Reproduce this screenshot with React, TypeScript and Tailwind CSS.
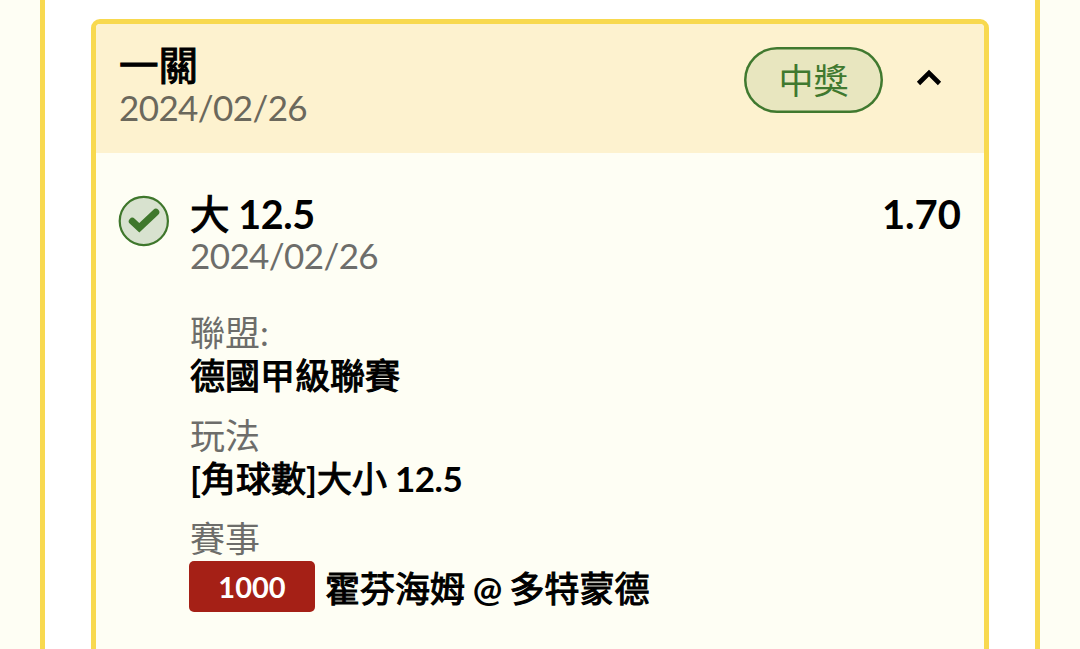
import { ReactNode } from 'react';

interface DetailProps {
  label: string;
  children: ReactNode;
}

// Chinese glyphs sit between regular and bold
function Han({ children }: { children: ReactNode }) {
  return <span className="font-normal [-webkit-text-stroke:1.100px_currentColor]">{children}</span>;
}

function Detail({ label, children }: DetailProps) {
  return (
    <div>
      <dt className="-mt-px mb-px text-[35px] leading-[42px] text-[#6d6d6a]">{label}</dt>
      <dd className="text-[35px] leading-[42px] font-bold text-black">{children}</dd>
    </div>
  );
}

function ChevronUpIcon() {
  return (
    <svg width="26" height="18" viewBox="0 0 26 18" fill="none" className="mb-1">
      <path d="M2.5 14.5 13 4l10.5 10.5" stroke="#000" strokeWidth="4.6" />
    </svg>
  );
}

function WonIcon() {
  return (
    <svg width="52" height="52" viewBox="0 0 52 52" fill="none" className="shrink-0">
      <circle cx="25.8" cy="26" r="24.1" fill="#d8e2cf" stroke="#3f772c" strokeWidth="2.2" />
      <path
        d="M14.3 26.3 21.3 32.8 37.8 17.2"
        stroke="#3f772c"
        strokeWidth="7"
        strokeLinecap="round"
      />
    </svg>
  );
}

export default function App() {
  return (
    <div className="h-[649px] overflow-hidden bg-[#fefef4] px-10 font-[Lato,'Noto_Sans_CJK_TC',sans-serif]">
      <div className="h-full border-x-[5px] border-[#f8d94f] bg-white px-[46px] pt-[19px]">
        <div className="h-[700px] overflow-hidden rounded-[9px] border-[5px] border-[#f8d94f] bg-[#fefef4]">
          {/* Header */}
          <div className="flex h-[129px] items-start justify-between bg-[#fdf2cf] pl-[23px] pr-[42px] pt-5">
            <div>
              <h2 className="text-[39.5px] leading-[42px] text-black">
                <Han>一關</Han>
              </h2>
              <p className="text-[35px] leading-[42px] tracking-[-0.6px] text-[#6b685c]">2024/02/26</p>
            </div>
            <div className="mt-[3px] flex items-center gap-[33px]">
              <span className="flex h-[66px] w-[139px] items-center justify-center rounded-full bg-[#e8e6bf] text-[35px] leading-none text-[#40792f] shadow-[inset_0_0_0_2.5px_#40792f]">
                中獎
              </span>
              <ChevronUpIcon />
            </div>
          </div>

          {/* Selection */}
          <div className="flex items-start pl-[22px] pr-[23px] pt-[39px]">
            <div className="mt-[3px]">
              <WonIcon />
            </div>
            <div className="ml-5 flex-1">
              <div className="mt-px -mb-px flex justify-between text-[40px] leading-[42px] font-bold text-black">
                <h3 className="text-[39.5px] tracking-[-0.4px]">
                  <Han>大</Han> 12.5
                </h3>
                <span>1.70</span>
              </div>
              <p className="text-[35px] leading-[42px] tracking-[-0.6px] text-[#6d6d6a]">2024/02/26</p>

              <dl className="mt-9 space-y-[19px]">
                <Detail label="聯盟:">
                  <Han>德國甲級聯賽</Han>
                </Detail>
                <Detail label="玩法">
                  [<Han>角球數</Han>]<Han>大小</Han>
                  <span className="tracking-[-0.5px]"> 12.5</span>
                </Detail>
                <Detail label="賽事">
                  <div className="-ml-px mt-0.5 flex items-center gap-2.5">
                    <span className="flex h-[51px] w-[126px] items-center justify-center rounded-[5px] bg-[#a52016] text-[29px] text-white">
                      1000
                    </span>
                    <span className="mt-0.5">
                      <Han>霍芬海姆</Han>
                      <span className="tracking-[-0.7px]"> @ </span>
                      <Han>多特蒙德</Han>
                    </span>
                  </div>
                </Detail>
              </dl>
            </div>
          </div>
        </div>
      </div>
    </div>
  );
}
